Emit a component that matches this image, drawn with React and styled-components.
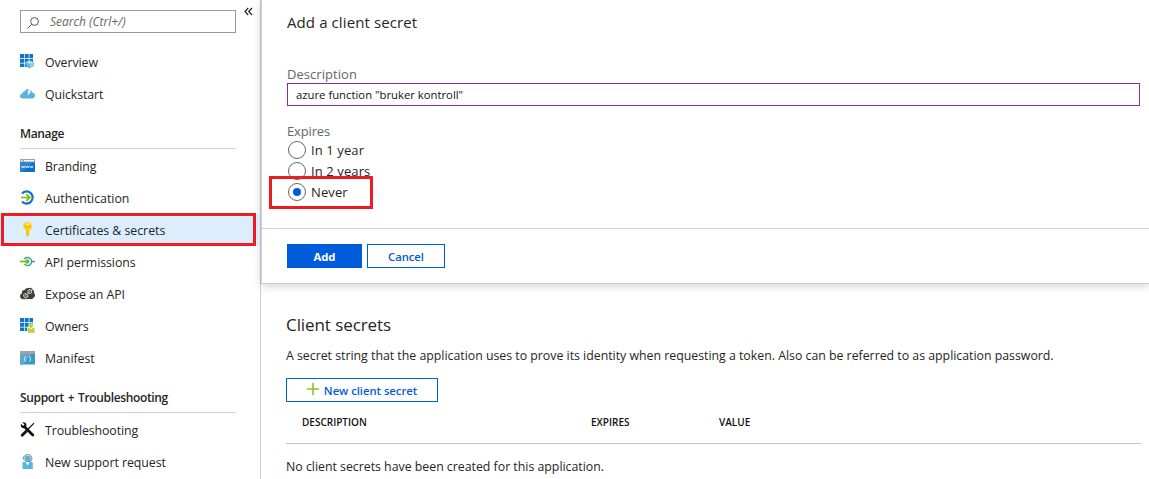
import React from "react";
import styled, { createGlobalStyle, css } from "styled-components";

const GlobalStyle = createGlobalStyle`
  * { box-sizing: border-box; }
  body {
    margin: 0;
    background: #fff;
    color: #252525;
    font-family: "Open Sans", "Noto Sans", sans-serif;
    font-size: 12.35px;
    overflow: hidden;
  }
`;

const Page = styled.div`
  display: flex;
  width: 100%;
  height: 479px;
  overflow: hidden;
`;

const Sidebar = styled.nav`
  flex: 0 0 261px;
  height: 100%;
  border-right: 1px solid #cdcdcd;
  overflow: hidden;
`;

const SearchRow = styled.div`
  display: flex;
  align-items: flex-start;
  height: 46px;
  padding: 10px 0 0 20px;
`;

const SearchBox = styled.div`
  display: flex;
  align-items: center;
  gap: 11px;
  width: 216px;
  height: 23px;
  padding: 0 7px 1px 6px;
  border: 1px solid #999;
  color: #666;
  font-size: 12px;
  font-style: italic;
  white-space: nowrap;

  svg {
    margin-top: 3px;
  }
`;

const Collapse = styled.svg`
  margin: -3px 0 0 8px;
`;

const NavItem = styled.a`
  position: relative;
  display: flex;
  align-items: center;
  gap: 10px;
  height: 32px;
  padding-left: 20px;
  white-space: nowrap;
  letter-spacing: ${(p) => p.$track || 0}px;
  background: ${(p) => (p.$active ? "#dcedfe" : "transparent")};

  svg {
    flex: none;
    margin-top: -2px;
  }
`;

const NavHeading = styled.h3`
  display: flex;
  align-items: flex-end;
  width: 216px;
  height: 39px;
  margin: 0 0 1px 20px;
  padding-bottom: 5px;
  border-bottom: 1px solid #cfcfcf;
  font-size: 12px;
  font-weight: 600;
  line-height: 18px;
  letter-spacing: -0.35px;
  word-spacing: 1px;
  white-space: nowrap;
`;

const Highlight = styled.span`
  position: absolute;
  border: 3px solid #ed1c24;
  pointer-events: none;
  ${(p) =>
    p.$nav
      ? css`inset: -1px 4px 0 1px;`
      : css`inset: -5px auto auto -18px; width: 104px; height: 33px;`}
`;

const Main = styled.main`
  flex: 1;
  min-width: 0;
`;

const Panel = styled.section`
  height: 284px;
  border-left: 1px solid #cfcfcf;
  border-bottom: 1px solid #cbcbcb;
  box-shadow: 0 2px 9px rgba(0, 0, 0, 0.18);
  background: #fff;
`;

const PanelBody = styled.div`
  height: 229px;
  padding: 11px 9px 0 25px;
  border-bottom: 1px solid #d2d2d2;
`;

const PanelTitle = styled.h2`
  margin: 0 0 30px;
  font-size: 15px;
  font-weight: 400;
  line-height: 23px;
  letter-spacing: 0.1px;
`;

const Label = styled.div`
  height: 19px;
  color: #666;
  font-size: 13px;
  line-height: 20px;
  letter-spacing: ${(p) => p.$track || 0}px;
`;

const TextField = styled.div`
  display: flex;
  align-items: center;
  height: 23px;
  margin-bottom: 15px;
  padding: 0 8px;
  border: 1px solid #8031a7;
  color: #111;
  font-size: 11.3px;
  line-height: 18px;
`;

const RadioGroup = styled.div`
  margin-top: -1px;
`;

const Radio = styled.div`
  position: relative;
  display: flex;
  align-items: center;
  gap: 5px;
  height: 21px;
  font-size: 13px;
  letter-spacing: 0.1px;
`;

const Dot = styled.span`
  display: flex;
  align-items: center;
  justify-content: center;
  width: 18px;
  height: 18px;
  margin-left: 1px;
  border: 1px solid #666;
  border-radius: 50%;

  &::after {
    content: "";
    width: 8px;
    height: 8px;
    border-radius: 50%;
    background: ${(p) => (p.$checked ? "#015cda" : "transparent")};
  }
`;

const Actions = styled.div`
  display: flex;
  gap: 5px;
  padding: 15px 0 0 25px;
`;

const Button = styled.button`
  display: flex;
  align-items: center;
  justify-content: center;
  gap: 5px;
  width: ${(p) => p.$width}px;
  height: 24px;
  padding: 1px 0 0;
  border: 1px solid #015cda;
  background: ${(p) => (p.$primary ? "#015cda" : "#fff")};
  color: ${(p) => (p.$primary ? "#fff" : "#015cda")};
  font-family: inherit;
  font-size: 11.3px;
  font-weight: ${(p) => (p.$primary ? 700 : 600)};
  letter-spacing: -0.04px;

  svg {
    margin-top: -3px;
  }
`;

const Secrets = styled.section`
  padding: 28px 8px 0 25px;
`;

const SecretsTitle = styled.h2`
  margin: 0 0 7px;
  font-size: 17px;
  font-weight: 400;
  line-height: 26px;
  letter-spacing: -0.08px;
`;

const Text = styled.p`
  margin: 0;
  line-height: 21px;
  letter-spacing: -0.015px;
  white-space: nowrap;
`;

const Tools = styled.div`
  padding-top: 12px;
`;

const HeaderRow = styled.div`
  display: grid;
  grid-template-columns: 289px 128px 1fr;
  align-items: center;
  height: 42px;
  margin-bottom: 12px;
  padding: 0 0 1px 16px;
  border-bottom: 1px solid #c6c6c6;
  color: #111;
  font-size: 10px;
  font-weight: 600;
`;

const Icon = ({ children }) => (
  <svg width="15" height="15" viewBox="0 0 15 15" fill="none">
    {children}
  </svg>
);

const Tiles = () => (
  <path
    d="M0 0h4v4H0zM4.7 0h4v4h-4zM9.4 0H13v4H9.4zM0 4.7h4v4H0zM4.7 4.7h4v4h-4zM9.4 4.7H13v4H9.4zM0 9.4h4V13H0zM4.7 9.4h4V13h-4z"
    fill="#0f74cc"
  />
);

const OverviewIcon = () => (
  <Icon>
    <Tiles />
    <path d="m9.6 6.6 4 1.6v4.1l-4 1.9-4-1.9V8.2z" fill="#59b4d9" />
    <path d="m9.6 6.6 4 1.6-4 1.8-4-1.8z" fill="#b8e2f2" />
    <path d="M9.6 10v4.2l4-1.9V8.2z" fill="#8bcde7" />
  </Icon>
);

const QuickstartIcon = () => (
  <Icon>
    <path
      d="M3 12.4C1.2 12.4 0 11.5 0 10c0-1.4 1-2.2 2.3-2.3C2.4 6 3.700 5.100 5 5.300 5.500 3.700 6.700 3 8.300 3c2 0 3.400 1.300 3.600 3.500 1.900 0 3.100 1.200 3.100 3s-1.200 2.900-3 2.900z"
      fill="#59b4d9"
    />
    <path d="M9.200 3 7.200 6.600h1.500L7.600 10l3.400-4.300H9.700L11 3z" fill="#fff" />
  </Icon>
);

const BrandingIcon = () => (
  <Icon>
    <path d="M0 1h15v3.500H0z" fill="#a0a1a2" />
    <path d="M1 2h1.500v1.400H1zM4 2h10v1.400H4z" fill="#e8f5fb" />
    <path d="M0 4.300h15V14H0z" fill="#0f6fc5" />
    <path d="M0 4.300h13L2 14H0z" fill="#2c83d0" />
    <path
      d="m1.500 7.800.9 2.200.8-2 .8 2 .8-2.200m.8 0 .9 2.200.8-2 .8 2 .8-2.200m.8 0 .9 2.200.8-2 .8 2 .8-2.200"
      stroke="#d3ebfa"
      strokeWidth=".8"
    />
  </Icon>
);

const AuthIcon = () => (
  <Icon>
    <path d="M2 3.400A6.100 6.100 0 1 1 2 11.600" stroke="#0f74cc" strokeWidth="2.200" />
    <path d="M1 7.500h8.200M6.300 4.200l3.400 3.300-3.400 3.300" stroke="#7fba00" strokeWidth="1.700" />
  </Icon>
);

const KeyIcon = () => (
  <Icon>
    <path
      d="M7.500 0C10 0 12 1.800 12 4.200c0 1.700-1 3.100-2.300 3.800v1l-.8 1 .8 1-.8 1 .8.900L7.700 15 6 13.500V8C4.500 7.300 3.200 5.900 3.200 4.200 3.200 1.800 5 0 7.500 0z"
      fill="#fcd116"
    />
    <circle cx="7.600" cy="2.300" r="1.100" fill="#fff8d0" />
    <path d="M4.800 4.700h5.500M7.200 8.200v5" stroke="#e8ac12" strokeWidth=".8" />
  </Icon>
);

const PermissionsIcon = () => (
  <Icon>
    <path d="M4.200 5.100a4.100 4.100 0 1 1 0 4.800" stroke="#3999c6" strokeWidth="1.500" />
    <path d="M11.500 7.500H15" stroke="#3999c6" strokeWidth="1.500" />
    <path d="M0 7.500h6" stroke="#7fba00" strokeWidth="1.700" />
    <circle cx="7.300" cy="7.500" r="2.200" fill="#7fba00" />
  </Icon>
);

const ExposeIcon = () => (
  <Icon>
    <path
      d="M3.200 13.200C1.300 13.200 0 12 0 10.300c0-1.500.9-2.500 2-2.800-.5-2 .8-3.600 2.600-3.400C5.500 2.200 7.300 1.600 9 2.100c1.300-.7 3.100 0 3.500 1.600 1.500.6 2 2.100 1.500 3.300 1.500 1.400 1.200 3.700-.4 4.500-.6 1.400-2.300 2-3.600 1.500z"
      fill="#3e3e3e"
    />
    <circle cx="5.700" cy="9.700" r="2" stroke="#e3e8d5" strokeWidth="1.300" strokeDasharray="1.300 .55" />
    <circle cx="9.800" cy="5.500" r="1.900" stroke="#e3e8d5" strokeWidth="1.200" strokeDasharray="1.300 .5" />
    <circle cx="5.700" cy="9.700" r=".8" fill="#9cb648" />
    <circle cx="9.800" cy="5.500" r=".7" fill="#9cb648" />
  </Icon>
);

const OwnersIcon = () => (
  <Icon>
    <Tiles />
    <path d="M7.200 9h7.300v6H7.200z" fill="#fff" />
    <path d="M8 10h1.600l1.500 1.500 1.500-1.500h1.900v4.800H8z" fill="#b8d432" />
    <circle cx="11" cy="7.900" r="2.300" fill="#b8d432" stroke="#fff" strokeWidth=".5" />
  </Icon>
);

const ManifestIcon = () => (
  <Icon>
    <path d="M0 1h15v3H0z" fill="#a0a1a2" />
    <path d="M0 4h15v10.500H0z" fill="#3999c6" />
    <path d="M0 4h12L3 14.500H0z" fill="#57a9cf" />
    <path
      d="M6 6.500c-1 0-1.200.3-1.200 1.100 0 .9-.2 1.200-.8 1.400.6.200.8.500.8 1.400 0 .8.200 1.100 1.200 1.100M9 6.500c1 0 1.200.3 1.200 1.100 0 .9.200 1.200.8 1.400-.6.200-.8.500-.8 1.400 0 .8-.2 1.100-1.200 1.100"
      stroke="#e8f5fb"
      strokeWidth=".9"
    />
  </Icon>
);

const ToolsIcon = () => (
  <Icon>
    <path d="m4.500 4.800 8.300 8.200" stroke="#111" strokeWidth="2.800" strokeLinecap="round" />
    <path
      d="M1 1.700 3.200 3.900l1.300-1.300L2.500.5C4.300 0 6.100.9 6.400 2.700c.2 1.500-.7 3.100-2.300 3.400C2.200 6.500.1 4.700 1 1.700z"
      fill="#111"
    />
    <path d="M14 1.200 8.200 7" stroke="#111" strokeWidth="1.200" />
    <path d="m6.200 9.200-4 4" stroke="#111" strokeWidth="2.800" strokeLinecap="round" />
  </Icon>
);

const SupportIcon = () => (
  <Icon>
    <path d="M2.500 15V9.200c0-.8.500-1.200 1.200-1.200h7.800c.7 0 1.300.4 1.300 1.200V15z" fill="#59b4d9" />
    <path d="M5.300 8h4.600l-2.300 3.400z" fill="#fff" />
    <circle cx="7.600" cy="5" r="3.200" fill="#59b4d9" />
    <path d="M3.400 5.500C3 2.500 4.800.7 7.600.7S12.200 2.500 11.800 5.500C11.500 7 10.300 7.700 8.800 7.800" stroke="#777" />
  </Icon>
);

const groups = [
  {
    items: [
      { label: "Overview", icon: OverviewIcon, track: -0.08 },
      { label: "Quickstart", icon: QuickstartIcon, track: -0.1 },
    ],
  },
  {
    title: "Manage",
    items: [
      { label: "Branding", icon: BrandingIcon, track: -0.14 },
      { label: "Authentication", icon: AuthIcon, track: -0.02 },
      { label: "Certificates & secrets", icon: KeyIcon, active: true, track: -0.03 },
      { label: "API permissions", icon: PermissionsIcon, track: -0.08 },
      { label: "Expose an API", icon: ExposeIcon, track: -0.05 },
      { label: "Owners", icon: OwnersIcon, track: -0.2 },
      { label: "Manifest", icon: ManifestIcon, track: -0.05 },
    ],
  },
  {
    title: "Support + Troubleshooting",
    items: [
      { label: "Troubleshooting", icon: ToolsIcon, track: -0.1 },
      { label: "New support request", icon: SupportIcon, track: -0.06 },
    ],
  },
];

const periods = ["In 1 year", "In 2 years", "Never"];

export default function App() {
  return (
    <Page>
      <GlobalStyle />
      <Sidebar>
        <SearchRow>
          <SearchBox>
            <svg width="12" height="12" viewBox="0 0 12 12" fill="none" stroke="#555">
              <circle cx="7.500" cy="4.500" r="3.900" />
              <path d="M4.700 7.300.5 11.500" />
            </svg>
            Search (Ctrl+/)
          </SearchBox>
          <Collapse width="9" height="9" viewBox="0 0 9 9" fill="none" stroke="#222" strokeWidth="1.200">
            <path d="M4.200 1 1 4.500 4.200 8M8 1 4.800 4.500 8 8" />
          </Collapse>
        </SearchRow>
        {groups.map((group) => (
          <React.Fragment key={group.title || "top"}>
            {group.title && <NavHeading>{group.title}</NavHeading>}
            {group.items.map(({ label, icon: Glyph, active, track }) => (
              <NavItem key={label} $active={active} $track={track}>
                <Glyph />
                {label}
                {active && <Highlight $nav />}
              </NavItem>
            ))}
          </React.Fragment>
        ))}
      </Sidebar>
      <Main>
        <Panel>
          <PanelBody>
            <PanelTitle>Add a client secret</PanelTitle>
            <Label $track={0.05}>Description</Label>
            <TextField>azure function "bruker kontroll"</TextField>
            <Label $track={-0.15}>Expires</Label>
            <RadioGroup>
              {periods.map((period) => (
                <Radio key={period}>
                  <Dot $checked={period === "Never"} />
                  {period}
                  {period === "Never" && <Highlight />}
                </Radio>
              ))}
            </RadioGroup>
          </PanelBody>
          <Actions>
            <Button $primary $width={75}>Add</Button>
            <Button $width={78}>Cancel</Button>
          </Actions>
        </Panel>
        <Secrets>
          <SecretsTitle>Client secrets</SecretsTitle>
          <Text>
            A secret string that the application uses to prove its identity when requesting a token. Also can be
            referred to as application password.
          </Text>
          <Tools>
            <Button $width={152}>
              <svg width="12" height="12" viewBox="0 0 12 12" stroke="#8fc31f" strokeWidth="1.600">
                <path d="M6 0v12M0 6h12" />
              </svg>
              New client secret
            </Button>
          </Tools>
          <HeaderRow>
            <span>DESCRIPTION</span>
            <span>EXPIRES</span>
            <span>VALUE</span>
          </HeaderRow>
          <Text>No client secrets have been created for this application.</Text>
        </Secrets>
      </Main>
    </Page>
  );
}
